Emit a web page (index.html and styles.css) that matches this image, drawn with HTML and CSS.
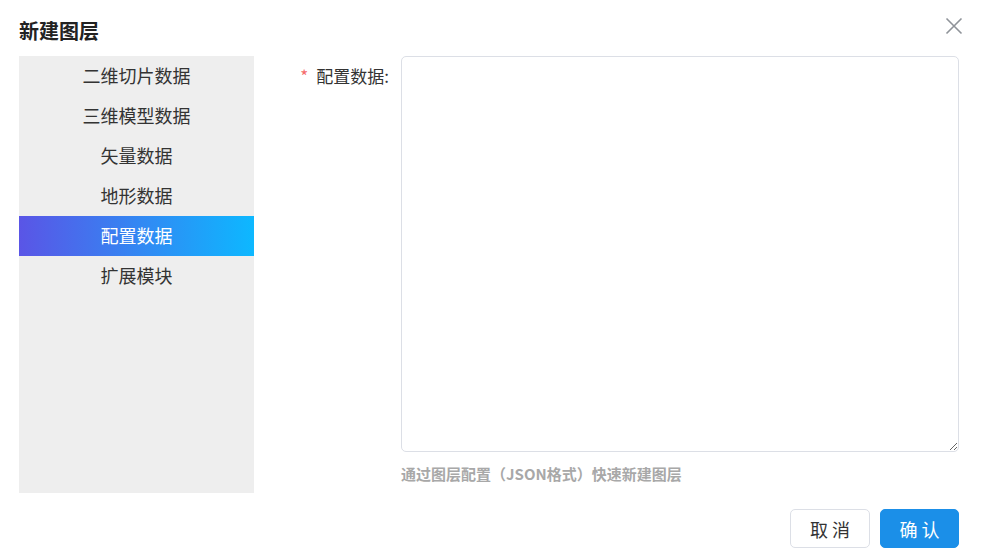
FILE: index.html
```html
<!DOCTYPE html>
<html lang="zh-CN">
<head>
<meta charset="utf-8">
<title>新建图层</title>
<link rel="stylesheet" href="styles.css">
</head>
<body>
<div class="dialog">
  <div class="header">
    <div class="title">新建图层</div>
    <button class="close" aria-label="关闭">
      <svg width="18" height="18" viewBox="0 0 18 18"><path d="M1.5 1.5 L16.5 16.5 M16.5 1.5 L1.5 16.5" stroke="#8f9399" stroke-width="1.6" fill="none"/></svg>
    </button>
  </div>
  <div class="body">
    <ul class="menu">
      <li class="item">二维切片数据</li>
      <li class="item">三维模型数据</li>
      <li class="item">矢量数据</li>
      <li class="item">地形数据</li>
      <li class="item active">配置数据</li>
      <li class="item">扩展模块</li>
    </ul>
    <div class="form">
      <label class="label"><span class="req">*</span>配置数据:</label>
      <div class="field">
        <textarea class="input"></textarea>
        <div class="hint">通过图层配置（JSON格式）快速新建图层</div>
      </div>
    </div>
  </div>
  <div class="footer">
    <button class="btn">取消</button>
    <button class="btn primary">确认</button>
  </div>
</div>
</body>
</html>
```
FILE: styles.css
```css
* { box-sizing: border-box; }
html, body {
  margin: 0;
  padding: 0;
  background: #fff;
  font-family: "Noto Sans CJK SC", "Noto Sans", sans-serif;
  color: #333;
}
.dialog {
  width: 984px;
  height: 559px;
  padding: 0 25px 0 19px;
  display: flex;
  flex-direction: column;
}
.header {
  height: 56px;
  display: flex;
  justify-content: space-between;
  align-items: flex-start;
}
.title {
  margin-top: 17px;
  font-size: 20px;
  line-height: 28px;
  font-weight: 700;
  color: #222;
}
.close {
  margin-top: 17px;
  margin-right: -4px;
  padding: 0;
  border: 0;
  background: none;
  width: 18px;
  height: 18px;
  display: flex;
}
.body {
  display: flex;
  height: 437px;
}
.menu {
  list-style: none;
  margin: 0;
  padding: 0;
  width: 235px;
  background: #eeeeee;
}
.item {
  height: 40px;
  line-height: 39px;
  text-align: center;
  font-size: 18px;
  color: #333;
}
.item.active {
  color: #fff;
  background: linear-gradient(90deg, #5a55e6 0%, #0db8ff 100%);
}
.form {
  flex: 1;
  display: flex;
}
.label {
  width: 147px;
  text-align: right;
  padding-right: 12px;
  font-size: 17px;
  line-height: 40px;
  color: #333;
}
.req {
  color: #f56c6c;
  margin-right: 8px;
}
.field {
  flex: 1;
  display: flex;
  flex-direction: column;
}
.input {
  width: 558px;
  height: 396px;
  border: 1px solid #dcdfe6;
  border-radius: 5px;
  font-family: inherit;
  resize: vertical;
  outline: none;
}
.hint {
  margin-top: 12px;
  font-size: 15px;
  line-height: 20px;
  font-weight: 700;
  color: #a8a8a8;
}
.footer {
  margin-top: 16px;
  display: flex;
  justify-content: flex-end;
  gap: 10px;
}
.btn {
  width: 80px;
  height: 39px;
  border: 1px solid #dcdfe6;
  border-radius: 5px;
  background: #fff;
  color: #333;
  font-family: inherit;
  font-size: 18px;
  letter-spacing: 4px;
  padding: 0 0 0 4px;
}
.btn.primary {
  width: 79px;
  background: #1b8fe8;
  border-color: #1b8fe8;
  color: #fff;
}
```
